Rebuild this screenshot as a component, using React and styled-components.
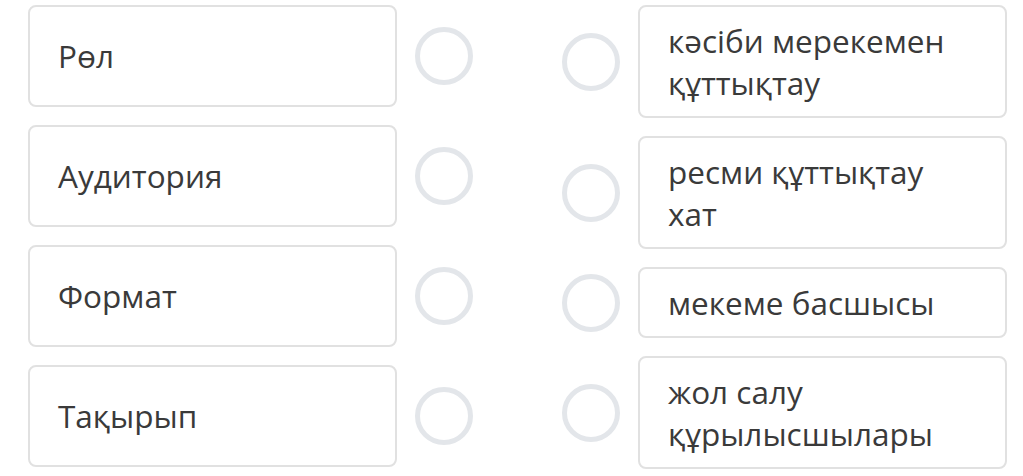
import React from "react";
import styled, {createGlobalStyle} from "styled-components";

const GlobalStyle = createGlobalStyle`
  body {
    margin: 0;
    background: #fff;
    font-family: "Open Sans", "Noto Sans", sans-serif;
  }
`;

const Page = styled.div`
  display: flex;
  gap: 89px;
  padding: 5px 0 0 28px;
`;

const Column = styled.div`
  display: flex;
  flex-direction: column;
  gap: 18px;
`;

const Row = styled.div`
  display: flex;
  align-items: center;
  gap: 18px;
`;

const Card = styled.div`
  box-sizing: border-box;
  width: 369px;
  min-height: ${props => props.tall ? "102px" : "auto"};
  display: flex;
  align-items: center;
  padding: 12.5px 28px;
  border: 2px solid #e1e1e1;
  border-radius: 8px;
  color: #3a3a3a;
  font-size: 31.5px;
  line-height: 42px;
`;

const Circle = styled.div`
  box-sizing: border-box;
  width: 58px;
  height: 58px;
  flex-shrink: 0;
  border: 5px solid #e3e6ea;
  border-radius: 50%;
`;

const leftItems = ["Рөл", "Аудитория", "Формат", "Тақырып"];

const rightItems = [
    ["кәсіби мерекемен", "құттықтау"],
    ["ресми құттықтау", "хат"],
    ["мекеме басшысы"],
    ["жол салу", "құрылысшылары"],
];

const App = () => {
    return (
        <>
            <GlobalStyle/>
            <Page>
                <Column>
                    {leftItems.map(item => (
                        <Row key={item}>
                            <Card tall>{item}</Card>
                            <Circle/>
                        </Row>
                    ))}
                </Column>
                <Column>
                    {rightItems.map(lines => (
                        <Row key={lines[0]}>
                            <Circle/>
                            <Card>
                                <div>
                                    {lines.map(line => <div key={line}>{line}</div>)}
                                </div>
                            </Card>
                        </Row>
                    ))}
                </Column>
            </Page>
        </>
    );
};

export default App;
